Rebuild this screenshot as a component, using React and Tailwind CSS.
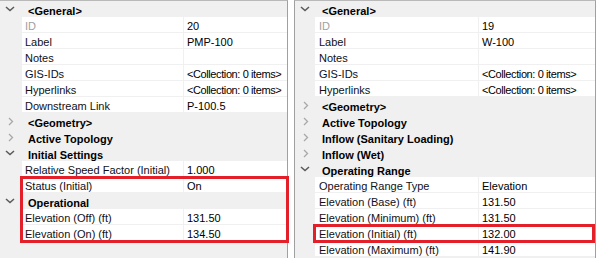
import React from "react";

const FONT = { fontFamily: '"Liberation Sans", Arial, sans-serif' };

function ChevronDown() {
  return (
    <svg width="10" height="6" viewBox="0 0 10 6" className="ml-[5px]">
      <path d="M1 1 L5 4.6 L9 1" fill="none" stroke="#5a5a5a" strokeWidth="1.5" />
    </svg>
  );
}

function ChevronRight() {
  return (
    <svg width="6" height="9" viewBox="0 0 6 9" className="ml-[8px]">
      <path d="M1 1 L4.5 4.5 L1 8" fill="none" stroke="#a8a8a8" strokeWidth="1.3" />
    </svg>
  );
}

function Header({ label, open, gutter, pad }) {
  return (
    <div className="flex h-[16px] items-stretch">
      <div className={`${gutter} flex items-center shrink-0`}>
        {open ? <ChevronDown /> : <ChevronRight />}
      </div>
      <div className={`${pad} font-bold text-[11px] leading-[20px] text-black whitespace-nowrap`}>
        {label}
      </div>
    </div>
  );
}

function Prop({ name, value, gray, gutter, nameW, namePad, valPad }) {
  const isColl = value.startsWith("<");
  return (
    <div className="flex h-[16px] items-start">
      <div className={`${gutter} shrink-0 h-[16px]`} />
      <div
        className={`${nameW} ${namePad} shrink-0 h-[15px] bg-white text-[11px] leading-[18px] whitespace-nowrap overflow-hidden ${
          gray ? "text-[#a0a0a0]" : "text-[#101018]"
        }`}
      >
        {name}
      </div>
      <div
        className={`ml-[1px] ${valPad} flex-1 h-[15px] bg-white text-[11px] leading-[18px] text-black whitespace-nowrap overflow-hidden ${
          isColl ? "tracking-[-0.4px]" : ""
        }`}
      >
        {value}
      </div>
    </div>
  );
}

const leftRows = [
  { h: "<General>", open: true },
  { n: "ID", v: "20", gray: true },
  { n: "Label", v: "PMP-100" },
  { n: "Notes", v: "" },
  { n: "GIS-IDs", v: "<Collection: 0 items>" },
  { n: "Hyperlinks", v: "<Collection: 0 items>" },
  { n: "Downstream Link", v: "P-100.5" },
  { h: "<Geometry>", open: false },
  { h: "Active Topology", open: false },
  { h: "Initial Settings", open: true },
  { n: "Relative Speed Factor (Initial)", v: "1.000" },
  { n: "Status (Initial)", v: "On" },
  { h: "Operational", open: true },
  { n: "Elevation (Off) (ft)", v: "131.50" },
  { n: "Elevation (On) (ft)", v: "134.50" },
];

const rightRows = [
  { h: "<General>", open: true },
  { n: "ID", v: "19", gray: true },
  { n: "Label", v: "W-100" },
  { n: "Notes", v: "" },
  { n: "GIS-IDs", v: "<Collection: 0 items>" },
  { n: "Hyperlinks", v: "<Collection: 0 items>" },
  { h: "<Geometry>", open: false },
  { h: "Active Topology", open: false },
  { h: "Inflow (Sanitary Loading)", open: false },
  { h: "Inflow (Wet)", open: false },
  { h: "Operating Range", open: true },
  { n: "Operating Range Type", v: "Elevation" },
  { n: "Elevation (Base) (ft)", v: "131.50" },
  { n: "Elevation (Minimum) (ft)", v: "131.50" },
  { n: "Elevation (Initial) (ft)", v: "132.00" },
  { n: "Elevation (Maximum) (ft)", v: "141.90" },
];

function Panel({ rows, gutter, nameW, namePad, valPad, hPad, className }) {
  return (
    <div className={`flex flex-col bg-[#f0f0f0] border-t border-t-[#b9b9b9] overflow-hidden ${className}`}>
      {rows.map((r, i) =>
        r.h ? (
          <Header key={i} label={r.h} open={r.open} gutter={gutter} pad={hPad} />
        ) : (
          <Prop
            key={i}
            name={r.n}
            value={r.v}
            gray={r.gray}
            gutter={gutter}
            nameW={nameW}
            namePad={namePad}
            valPad={valPad}
          />
        )
      )}
    </div>
  );
}

export default function App() {
  return (
    <div className="relative w-[598px] h-[258px] bg-white flex overflow-hidden" style={FONT}>
      <Panel
        rows={leftRows}
        gutter="w-[22px]"
        nameW="w-[161px]"
        namePad="pl-[3px]"
        valPad="pl-[3px]"
        hPad="pl-[6px]"
        className="w-[288px] h-[258px] border-r border-r-[#a0a0a0]"
      />
      <div className="w-[6px] shrink-0" />
      <Panel
        rows={rightRows}
        gutter="w-[20px]"
        nameW="w-[163px]"
        namePad="pl-[4px]"
        valPad="pl-[3px]"
        hPad="pl-[7px]"
        className="w-[302px] h-[258px] border-l border-l-[#a0a0a0] border-r border-r-[#a0a0a0]"
      />
      <div className="absolute left-[20px] top-[176px] w-[269px] h-[67px] border-[3px] border-[#e3202a]" />
      <div className="absolute left-[313px] top-[224px] w-[282px] h-[19px] border-[3px] border-[#e3202a]" />
    </div>
  );
}
